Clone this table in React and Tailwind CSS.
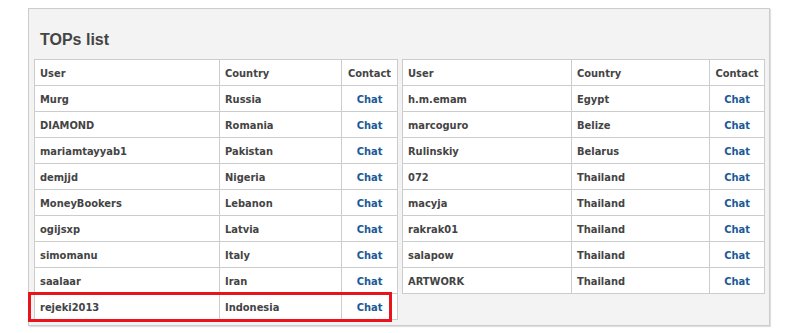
import React from 'react';

const leftRows = [
    ['Murg', 'Russia'],
    ['DIAMOND', 'Romania'],
    ['mariamtayyab1', 'Pakistan'],
    ['demjjd', 'Nigeria'],
    ['MoneyBookers', 'Lebanon'],
    ['ogijsxp', 'Latvia'],
    ['simomanu', 'Italy'],
    ['saalaar', 'Iran'],
    ['rejeki2013', 'Indonesia'],
];

const rightRows = [
    ['h.m.emam', 'Egypt'],
    ['marcoguro', 'Belize'],
    ['Rulinskiy', 'Belarus'],
    ['072', 'Thailand'],
    ['macyja', 'Thailand'],
    ['rakrak01', 'Thailand'],
    ['salapow', 'Thailand'],
    ['ARTWORK', 'Thailand'],
];

const cell = 'border border-[#cccccc] px-[5px] pt-[3px] pb-0 h-[26px] align-middle';

const TopTable = ({ rows, widths, className }) => (
    <table className={`table-fixed border-collapse bg-white self-start ${className}`}>
        <colgroup>
            <col style={{ width: widths[0] }} />
            <col style={{ width: widths[1] }} />
            <col />
        </colgroup>
        <thead>
            <tr>
                <th className={`${cell} text-left font-bold`}>User</th>
                <th className={`${cell} text-left font-bold`}>Country</th>
                <th className={`${cell} text-center font-bold`}>Contact</th>
            </tr>
        </thead>
        <tbody>
            {rows.map(([user, country]) => (
                <tr key={user}>
                    <td className={cell}>{user}</td>
                    <td className={cell}>{country}</td>
                    <td className={`${cell} text-center`}>
                        <a href="#" className="text-[#1b5a97]">Chat</a>
                    </td>
                </tr>
            ))}
        </tbody>
    </table>
);

export default function App() {
    return (
        <div className="relative bg-white w-[786px] h-[333px] pt-[8px] pl-[28px]">
            <div className="w-[742px] bg-[#f3f3f3] border border-[#cccccc] shadow-[1px_1px_1px_rgba(0,0,0,0.12)] pt-[22px] pb-[5px] pl-[5px] pr-[4px]">
                <h2 className="text-[16px] leading-[18px] font-bold text-[#444444] pl-[6px] mb-[10px] font-['Liberation_Sans',Arial,sans-serif]">
                    TOPs list
                </h2>
                <div className="flex gap-[4px] items-start text-[11px] font-bold text-[#444444] font-['DejaVu_Sans_Condensed','DejaVu_Sans',sans-serif]">
                    <TopTable rows={leftRows} widths={['185px', '122px']} className="w-[364px]" />
                    <TopTable rows={rightRows} widths={['169px', '138px']} className="w-[363px]" />
                </div>
            </div>
            <div className="absolute left-[28px] top-[292px] w-[364px] h-[30px] border-[3px] border-[#e8141c] pointer-events-none"></div>
        </div>
    );
}
